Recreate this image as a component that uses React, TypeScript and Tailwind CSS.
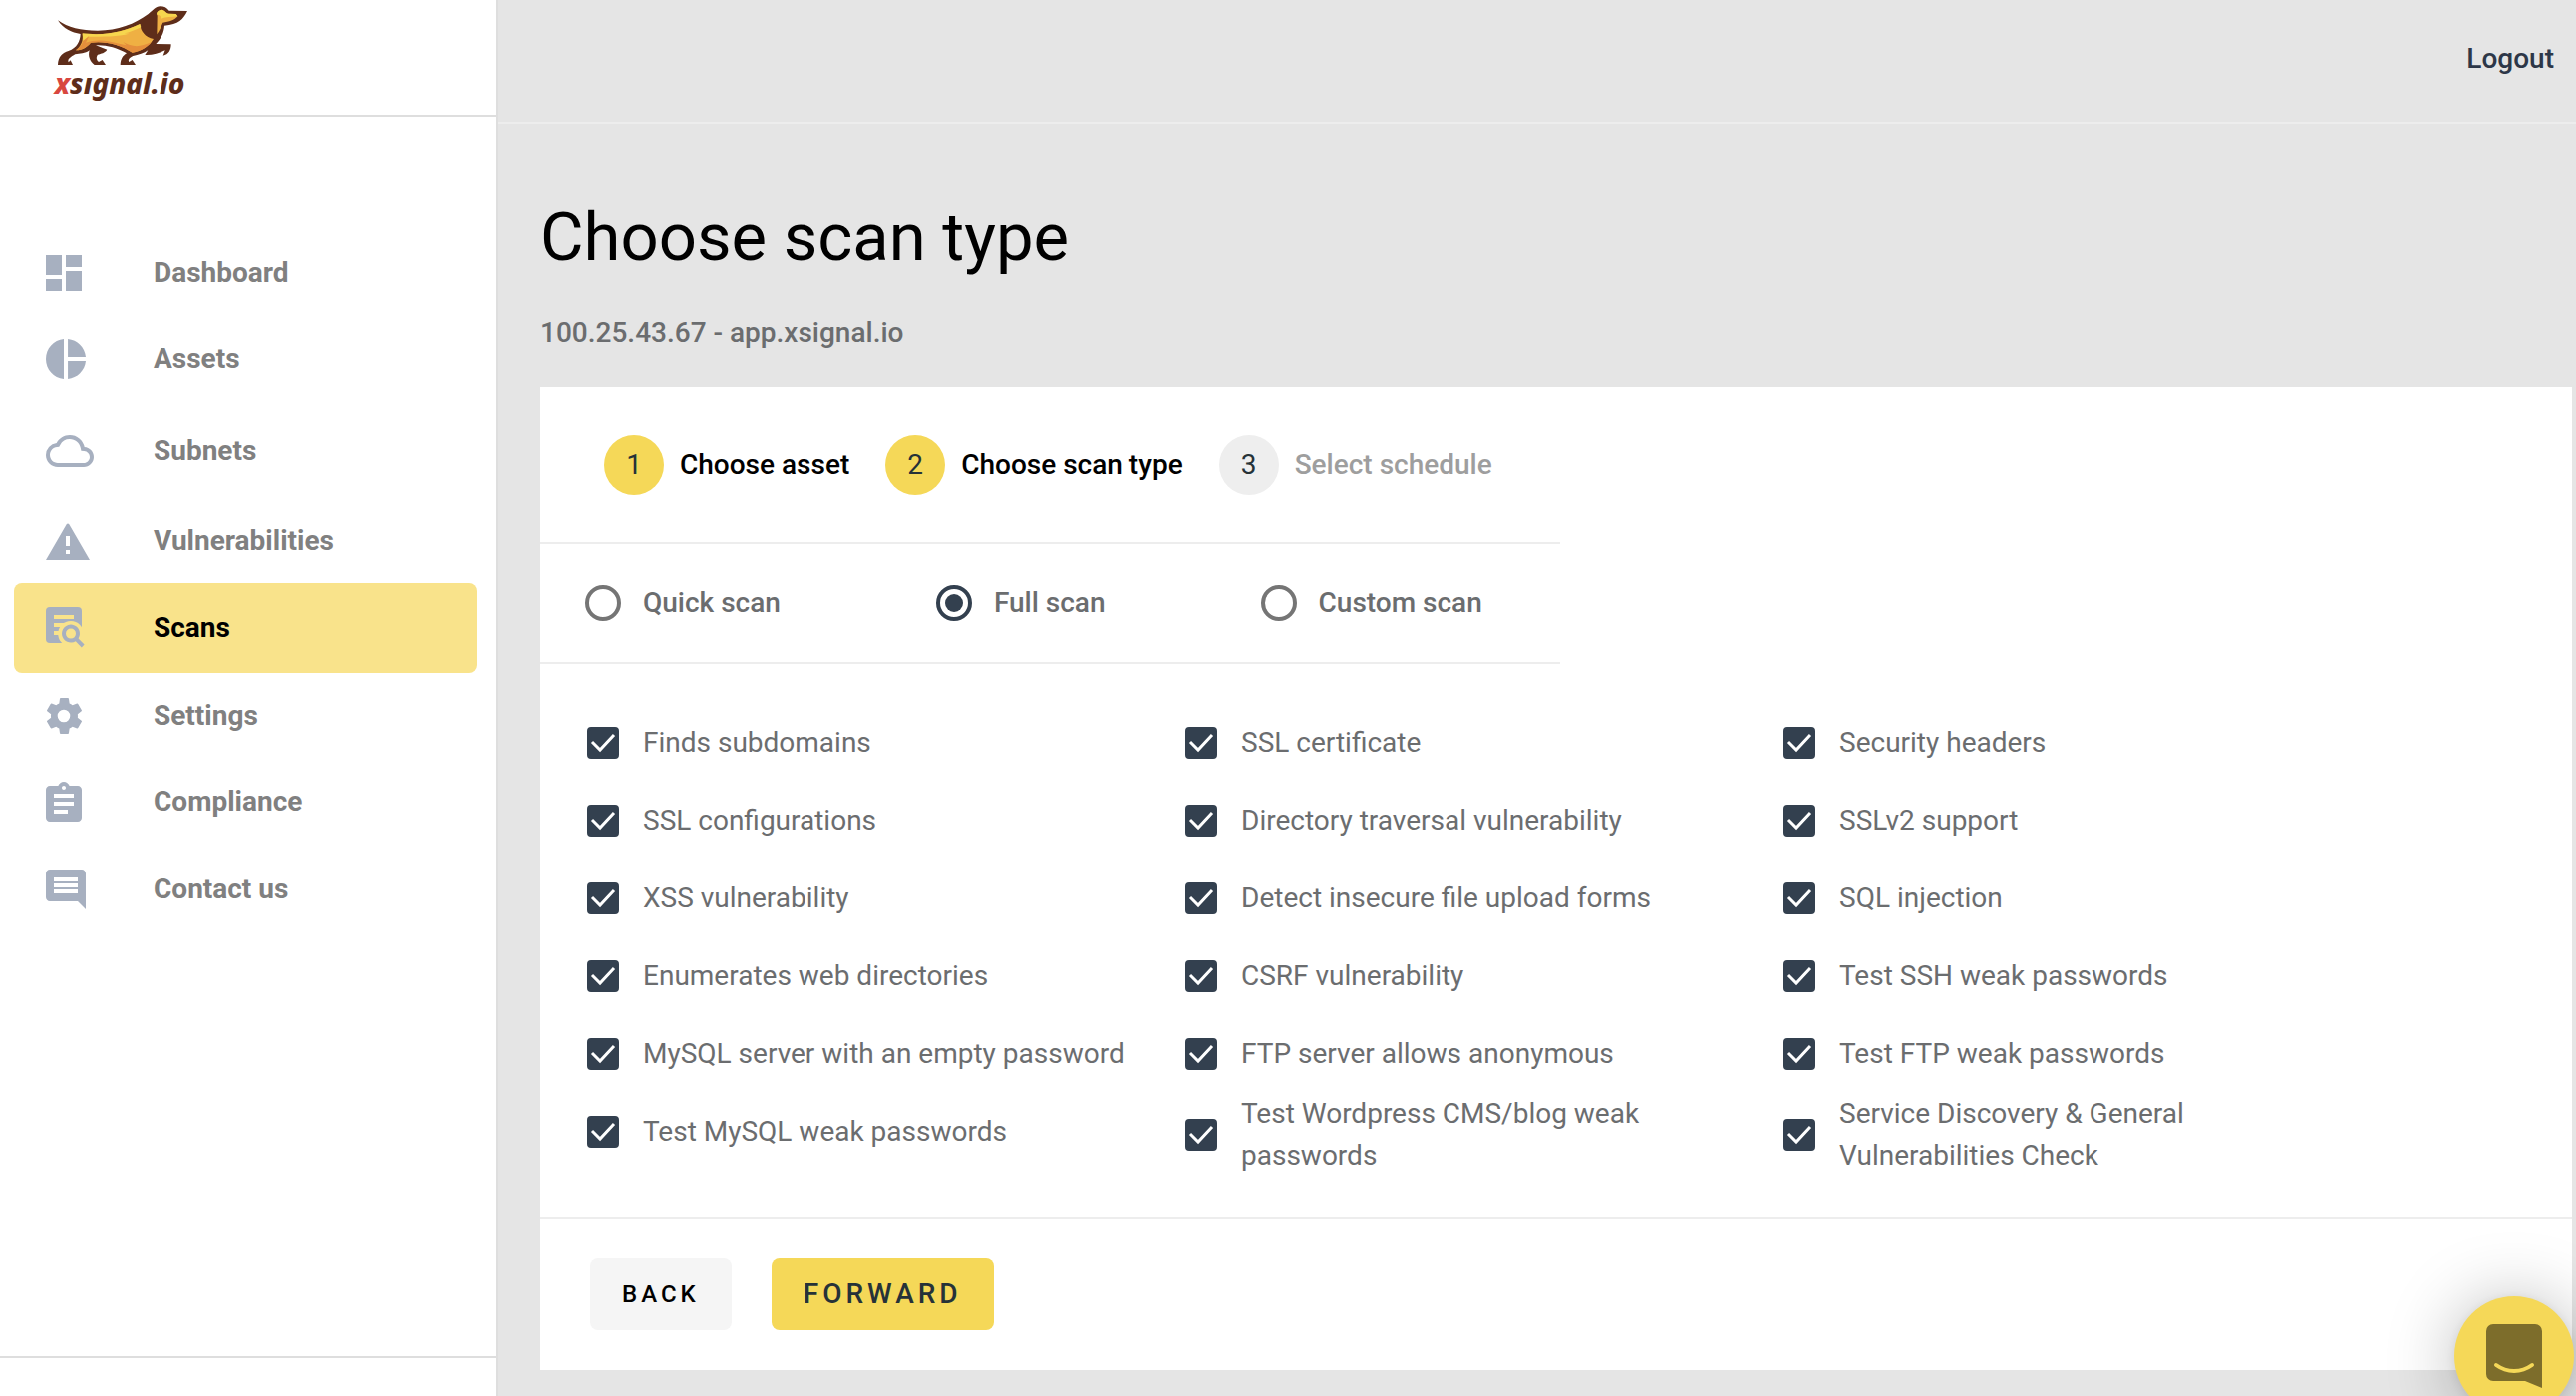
import { useState, type ReactNode } from 'react';
import clsx from 'clsx';

// Types
interface NavEntry {
  label: string;
  height: string;
  icon: ReactNode;
}

// Constants
const NAV_ITEMS: NavEntry[] = [
  {
    label: 'Dashboard',
    height: 'h-[86px]',
    icon: (
      <svg width="36" height="36" viewBox="0 0 18 18" fill="currentColor">
        <path d="M0 10h8V0H0v10zm0 8h8v-6H0v6zm10 0h8V8h-8v10zm0-18v6h8V0h-8z" />
      </svg>
    ),
  },
  {
    label: 'Assets',
    height: 'h-[86px]',
    icon: (
      <svg width="40" height="40" viewBox="2 2 20 20" fill="currentColor">
        <path d="M11 2v20c-5.07-.5-9-4.79-9-10s3.93-9.5 9-10zm2.03 0v8.99H22c-.47-4.74-4.24-8.52-8.97-8.99zm0 11.01V22c4.74-.47 8.5-4.25 8.97-8.99h-8.97z" />
      </svg>
    ),
  },
  {
    label: 'Subnets',
    height: 'h-[98px]',
    icon: (
      <svg width="48" height="32" viewBox="0 4 24 16" fill="currentColor">
        <path d="M19.35 10.04A7.49 7.49 0 0 0 12 4C9.11 4 6.6 5.64 5.35 8.04A5.994 5.994 0 0 0 0 14c0 3.31 2.69 6 6 6h13c2.76 0 5-2.24 5-5 0-2.64-2.05-4.78-4.65-4.96zM19 18H6c-2.21 0-4-1.79-4-4 0-2.05 1.53-3.76 3.56-3.97l1.07-.11.5-.95A5.469 5.469 0 0 1 12 6c2.62 0 4.88 1.86 5.39 4.43l.3 1.5 1.53.11A2.98 2.98 0 0 1 22 15c0 1.65-1.35 3-3 3z" />
      </svg>
    ),
  },
  {
    label: 'Vulnerabilities',
    height: 'h-[84px]',
    icon: (
      <svg width="44" height="38" viewBox="1 2 22 19" fill="currentColor">
        <path d="M1 21h22L12 2 1 21zm12-3h-2v-2h2v2zm0-4h-2V9h2v5z" />
      </svg>
    ),
  },
  {
    label: 'Scans',
    height: 'h-[90px]',
    icon: (
      <svg width="40" height="42" viewBox="0 0 20 21" fill="currentColor">
        <mask id="scan-lens">
          <rect width="20" height="21" fill="white" />
          <path d="M4 4h10v2H4zM4 8h10v2H4zM4 12h8v2H4zM12 14l7-3v8h-8z" fill="black" />
          <circle cx="12.5" cy="13.4" r="6.4" fill="black" />
        </mask>
        <rect width="18" height="18" rx="2" mask="url(#scan-lens)" />
        <path
          fillRule="evenodd"
          d="M16.3 15.7a4.5 4.5 0 1 0-1.4 1.4l3 3.1 1.4-1.4-3-3.1zM12.5 15.8a2.5 2.5 0 1 1 0-5 2.5 2.5 0 0 1 0 5z"
        />
      </svg>
    ),
  },
  {
    label: 'Settings',
    height: 'h-[86px]',
    icon: (
      <svg width="36" height="36" viewBox="3 3 18 18" fill="currentColor">
        <path d="M18.92 12.88c.04-.29.06-.58.06-.88s-.02-.59-.06-.88l1.9-1.48c.17-.13.22-.38.11-.57l-1.8-3.12a.45.45 0 0 0-.55-.2l-2.24.9a6.6 6.6 0 0 0-1.52-.88l-.34-2.39a.44.44 0 0 0-.44-.38h-3.6c-.23 0-.41.16-.44.38l-.34 2.39c-.55.22-1.06.52-1.52.88l-2.24-.9a.44.44 0 0 0-.55.2l-1.8 3.12c-.11.19-.06.44.11.57l1.9 1.48a6.9 6.9 0 0 0 0 1.76l-1.9 1.48a.46.46 0 0 0-.11.57l1.8 3.12c.11.19.35.27.55.2l2.24-.9c.47.36.97.66 1.52.88l.34 2.39c.03.22.21.38.44.38h3.6c.23 0 .41-.16.44-.38l.34-2.39c.55-.23 1.06-.52 1.52-.88l2.24.9c.2.08.44 0 .55-.2l1.8-3.12a.46.46 0 0 0-.11-.57l-1.9-1.48zM12 15.15a3.15 3.15 0 1 1 0-6.3 3.15 3.15 0 0 1 0 6.3z" />
      </svg>
    ),
  },
  {
    label: 'Compliance',
    height: 'h-[86px]',
    icon: (
      <svg width="36" height="40" viewBox="3 1 18 20" fill="currentColor">
        <path d="M19 3h-4.18C14.4 1.84 13.3 1 12 1s-2.4.84-2.82 2H5c-1.1 0-2 .9-2 2v14c0 1.1.9 2 2 2h14c1.1 0 2-.9 2-2V5c0-1.1-.9-2-2-2zm-7 0c.55 0 1 .45 1 1s-.45 1-1 1-1-.45-1-1 .45-1 1-1zm2 14H7v-2h7v2zm3-4H7v-2h10v2zm0-4H7V7h10v2z" />
      </svg>
    ),
  },
  {
    label: 'Contact us',
    height: 'h-[90px]',
    icon: (
      <svg width="40" height="40" viewBox="2 2 20 20" fill="currentColor">
        <path d="M21.99 4c0-1.1-.89-2-1.99-2H4c-1.1 0-2 .9-2 2v12c0 1.1.9 2 2 2h14l4 4-.01-18zM18 14H6v-2h12v2zm0-3H6V9h12v2zm0-3H6V6h12v2z" />
      </svg>
    ),
  },
];

const STEPS = ['Choose asset', 'Choose scan type', 'Select schedule'];
const CURRENT_STEP = 2;

const SCAN_TYPES = ['Quick scan', 'Full scan', 'Custom scan'];

const CHECKS = [
  'Finds subdomains',
  'SSL certificate',
  'Security headers',
  'SSL configurations',
  'Directory traversal vulnerability',
  'SSLv2 support',
  'XSS vulnerability',
  'Detect insecure file upload forms',
  'SQL injection',
  'Enumerates web directories',
  'CSRF vulnerability',
  'Test SSH weak passwords',
  'MySQL server with an empty password',
  'FTP server allows anonymous',
  'Test FTP weak passwords',
  'Test MySQL weak passwords',
  'Test Wordpress CMS/blog weak passwords',
  'Service Discovery & General Vulnerabilities Check',
];

// Logo: hound drawing with the wordmark below
const Logo = () => (
  <svg width="150" height="104" viewBox="0 0 450 312" role="img" aria-label="xsignal.io">
    {/* Outline, ear and legs */}
    <path
      fill="#5e2d1a"
      d="M30 61C60 83 100 92 150 92C210 92 262 72 302 42C316 31 324 19 338 19C350 19 358 23 365 32L420 33C408 58 394 73 351 77C350 98 340 116 325 132L371 133C371 150 364 164 347 167L353 151C334 161 313 166 292 165L301 151C290 160 272 165 256 168C244 174 240 181 244 186L254 180L264 195L218 195C219 178 224 168 237 160C208 143 172 134 144 136L178 149C172 159 160 161 150 164C144 172 146 180 153 186L164 180L174 195L140 195C126 184 120 168 125 151C112 162 96 160 82 163C70 171 58 176 62 187L68 181L75 195L30 195C31 170 44 158 62 153C88 144 97 124 98 102C72 98 46 86 30 61Z"
    />
    {/* Body */}
    <path
      fill="#efb043"
      d="M104 101C170 108 228 96 277 72C279 94 292 112 318 117C303 140 280 154 254 158C218 134 172 122 129 128C120 140 106 150 84 151C100 138 107 122 104 101Z"
    />
    <path
      fill="#f6d64e"
      d="M104 100C170 108 228 96 277 72L280 82C262 90 244 98 230 100L244 101C214 110 160 110 122 110L106 124Z"
    />
    <path
      fill="#e58f3c"
      d="M106 122L124 108L114 128C148 116 180 122 214 131L236 136L226 126C254 142 276 143 312 126C298 144 276 155 254 158C218 134 172 122 129 128C120 140 106 150 84 151C96 142 104 132 106 122Z"
    />
    {/* Head */}
    <path
      fill="#efb043"
      d="M329 47C324 40 332 30 342 29C352 30 356 40 364 41L386 42L391 49C382 60 366 66 346 68C341 80 336 92 328 103Z"
    />
    <path fill="#f6d64e" d="M329 44C324 38 332 30 342 29C352 30 356 40 364 41L386 42L391 49C372 52 356 50 341 56C340 48 336 44 329 44Z" />
    <text x="20" y="282" fontFamily="'Noto Sans', sans-serif" fontSize="84" fontStyle="italic" fontWeight="800" fill="#5e2d1a">
      <tspan fill="#d8473f">x</tspan>sıgnal.io
    </text>
  </svg>
);

const NavItem = ({ item, active }: { item: NavEntry; active: boolean }) => (
  <a
    href="#"
    aria-current={active ? 'page' : undefined}
    className={clsx(
      'flex items-center rounded-lg pl-8 text-[28px] leading-8 font-bold',
      item.height,
      active ? 'bg-[#f9e38b] text-black' : 'text-[#808080]'
    )}
  >
    <span className="w-[108px] text-[#a7b0c0]">{item.icon}</span>
    {item.label}
  </a>
);

const Step = ({ index, label }: { index: number; label: string }) => {
  const reached = index <= CURRENT_STEP;

  return (
    <li className="flex items-center gap-4">
      <span
        className={clsx(
          'flex size-[60px] items-center justify-center rounded-full text-[28px] text-[#263238]',
          reached ? 'bg-[#f5d858]' : 'bg-[#eeeeee]'
        )}
      >
        {index}
      </span>
      <span className={clsx('text-[28px] font-medium', reached ? 'text-black' : 'text-[#9e9e9e]')}>{label}</span>
    </li>
  );
};

const CheckOption = ({ label }: { label: string }) => {
  const [checked, setChecked] = useState(true);

  return (
    <label className="flex min-h-[78px] items-center gap-6 pr-8 text-[28px] leading-[42px] text-[#6b6d6f]">
      <span className="relative size-8 shrink-0">
        <input
          type="checkbox"
          checked={checked}
          onChange={() => setChecked(!checked)}
          className="block size-8 appearance-none rounded border-3 border-[#757575] checked:border-[#33404f] checked:bg-[#33404f]"
        />
        {checked && (
          <svg className="pointer-events-none absolute inset-0" width="32" height="32" viewBox="0 0 32 32" fill="none">
            <path d="M5 15l8 8L27 8" stroke="white" strokeWidth="3" />
          </svg>
        )}
      </span>
      {label}
    </label>
  );
};

export default function App() {
  const [scanType, setScanType] = useState('Full scan');

  return (
    <div className="flex min-h-screen bg-[#e5e5e5] font-[Roboto,sans-serif]">
      {/* Sidebar */}
      <aside className="flex w-[500px] shrink-0 flex-col border-r-2 border-[#dedede] bg-white">
        <div className="h-[117px] border-b-2 border-[#dedede] pl-12">
          <Logo />
        </div>
        <nav className="flex flex-col pt-[114px] pr-5 pl-[14px]">
          {NAV_ITEMS.map(item => (
            <NavItem key={item.label} item={item} active={item.label === 'Scans'} />
          ))}
        </nav>
        <div className="mt-auto h-10 border-t-2 border-[#dedede]" />
      </aside>

      <div className="flex min-w-0 grow flex-col">
        <header className="flex h-[124px] items-center justify-end border-b-2 border-[#ededed] pr-[22px] pb-1">
          <a href="#" className="text-[28px] leading-8 font-medium text-[#2d3748]">
            Logout
          </a>
        </header>

        <main className="pt-[74px] pr-1 pb-[26px] pl-[42px]">
          <h1 className="text-[67px] leading-[80px]">Choose scan type</h1>
          <p className="pt-10 pb-[38px] text-[28px] leading-8 font-medium text-[#6b6d6f]">100.25.43.67 - app.xsignal.io</p>

          <section className="bg-white">
            <ol className="flex h-[158px] w-[1023px] items-center gap-9 border-b-2 border-[#ededed] pl-16">
              {STEPS.map((label, i) => (
                <Step key={label} index={i + 1} label={label} />
              ))}
            </ol>

            {/* Scan type */}
            <div className="flex h-[120px] w-[1023px] items-center gap-[156px] border-b-2 border-[#ededed] pl-[45px]">
              {SCAN_TYPES.map(type => (
                <label key={type} className="flex items-center gap-[22px] text-[28px] font-medium text-[#6b6d6f]">
                  <input
                    type="radio"
                    name="scan-type"
                    checked={scanType === type}
                    onChange={() => setScanType(type)}
                    className="flex size-9 appearance-none items-center justify-center rounded-full border-4 border-[#757575] before:size-[18px] before:rounded-full checked:border-[#33404f] checked:before:bg-[#33404f]"
                  />
                  {type}
                </label>
              ))}
            </div>

            {/* Checks */}
            <div className="py-10 pl-[47px]">
              <div className="grid max-w-[1800px] grid-cols-3 items-start">
                {CHECKS.map(label => (
                  <CheckOption key={label} label={label} />
                ))}
              </div>
            </div>

            <div className="flex gap-10 border-t-2 border-[#ededed] px-[50px] py-10">
              <button type="button" className="h-[72px] rounded-lg bg-[#f5f5f5] px-8 text-2xl font-medium tracking-[4px]">
                BACK
              </button>
              <button
                type="button"
                className="h-[72px] rounded-lg bg-[#f5d858] px-8 text-[28px] font-medium tracking-[4px] text-[#263238]"
              >
                FORWARD
              </button>
            </div>
          </section>
        </main>
      </div>

      {/* Chat launcher */}
      <button
        type="button"
        aria-label="Open chat"
        className="fixed right-0.5 -bottom-5 flex size-[120px] items-center justify-center rounded-full bg-[#f5d858] shadow-[0_4px_70px_rgba(0,0,0,0.28),0_2px_12px_rgba(0,0,0,0.08)]"
      >
        <svg width="56" height="64" viewBox="0 0 56 64">
          <path fill="#7d6d2b" d="M7 0h42a7 7 0 0 1 7 7v57l-17-7H7a7 7 0 0 1-7-7V7a7 7 0 0 1 7-7z" />
          <path d="M10 41c11 8 25 8 36 0" fill="none" stroke="#f5d858" strokeWidth="4" strokeLinecap="round" />
        </svg>
      </button>
    </div>
  );
}
